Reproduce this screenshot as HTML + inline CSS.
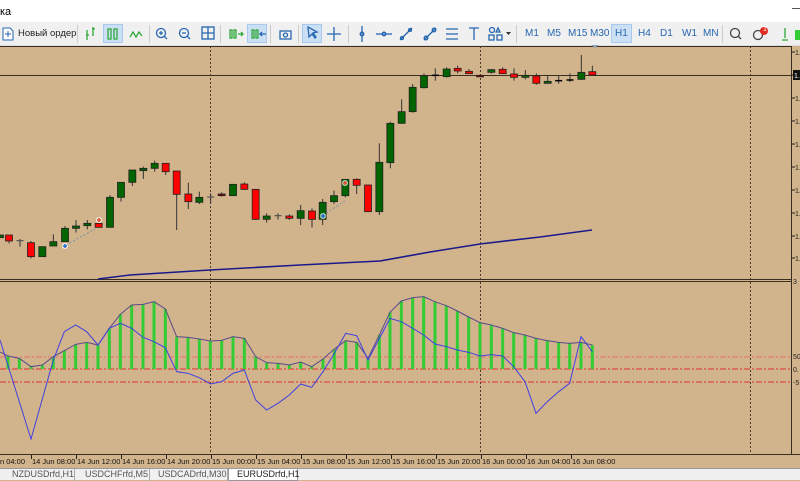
<!DOCTYPE html>
<html><head><meta charset="utf-8"><style>
*{margin:0;padding:0;box-sizing:border-box}
body{width:800px;height:480px;overflow:hidden;background:#d2b48c;font-family:"Liberation Sans","DejaVu Sans",sans-serif;position:relative}
#top{position:absolute;left:0;top:0;width:800px;height:22px;background:#fff;font-size:11px;color:#000}
#tb{position:absolute;left:0;top:22px;width:800px;height:24px;background:#f0f0f0;border-bottom:1px solid #ddd;font-size:10px;color:#1a5ea8}
.hl{position:absolute;top:2px;height:19px;background:#cce0f5;border:1px solid #a8c8ee}
.sep{position:absolute;top:3px;width:1px;height:18px;background:#ccc}
.tf{position:absolute;top:6px;font-size:10px;color:#2566b0}
#tabs{position:absolute;left:0;top:468px;width:800px;height:12px;background:#f0f0f0;border-top:1px solid #999;font-size:9px;color:#555}
.tab{position:absolute;top:0;height:12px;padding-left:12px;border-right:1px solid #aaa}
</style></head><body>
<div id="top"><span style="position:absolute;left:0;top:6px">ка</span><div style="position:absolute;right:0;top:8px;width:8px;height:1px;background:#555"></div></div>
<div id="tb">
<svg style="position:absolute;left:2px;top:5px" width="12" height="14"><path d="M1 1h7l3 3v9H1z" fill="#fff" stroke="#2566b0"/><path d="M6 4v6M3 7h6" stroke="#2566b0"/></svg>
<span style="position:absolute;left:18px;top:6px;color:#222;font-size:9.5px">Новый ордер</span>
<div class="sep" style="left:77px"></div>
<div class="hl" style="left:103px;width:20px"></div>
<div class="hl" style="left:247px;width:20px"></div>
<div class="hl" style="left:302px;width:20px"></div>
<div class="hl" style="left:611px;width:21px"></div>
<div class="sep" style="left:149px"></div><div class="sep" style="left:220px"></div><div class="sep" style="left:270px"></div><div class="sep" style="left:298px"></div><div class="sep" style="left:348px"></div><div class="sep" style="left:516px"></div><div class="sep" style="left:722px"></div>
<svg style="position:absolute;left:0;top:0" width="800" height="24" fill="none" stroke-width="1.3">
<g stroke="#2fa83a"><path d="M87 8v10M86 13h3M93 5v9M92 7h3"/><rect x="108" y="7" width="3" height="10"/><rect x="114" y="7" width="3" height="10"/><path d="M130 15l3-5 3 5 3-5 3 4"/>
<rect x="230" y="8" width="2" height="8"/><rect x="234" y="8" width="2" height="8"/><path d="M238 12h5M241 10l2 2-2 2"/>
<rect x="252" y="8" width="2" height="8"/><rect x="256" y="8" width="2" height="8"/></g>
<path d="M260 12h6M262 10l-2 2 2 2" stroke="#2566b0"/>
<g stroke="#2566b0"><circle cx="161" cy="11" r="4.5"/><path d="M164 14l3 3M159 11h4M161 9v4"/><circle cx="184" cy="11" r="4.5"/><path d="M187 14l3 3M182 11h4"/><rect x="202" y="5" width="12" height="12"/><path d="M208 5v12M202 11h12"/>
<rect x="280" y="9" width="11" height="8"/><circle cx="285.5" cy="13" r="2"/><path d="M308 5l9 5-4 1 3 4-1 1-3-4-3 3z"/><path d="M334 5v14M327 12h14"/>
<path d="M362 4v16"/><circle cx="362" cy="12" r="1.8"/><path d="M376 12h16"/><circle cx="384" cy="12" r="1.8"/><path d="M400 18l12-12"/><circle cx="402" cy="16" r="1.5"/><circle cx="410" cy="8" r="1.5"/><path d="M424 18l12-12"/><circle cx="426" cy="16" r="1.8"/><circle cx="434" cy="8" r="1.8"/>
<path d="M446 7h12M446 12h12M446 17h12"/><path d="M469 6h10M474 6v12"/><circle cx="492" cy="8" r="2.5"/><rect x="489" y="13" width="5" height="5"/><rect x="497" y="13" width="5" height="5"/><path d="M496 10l2-4 2 4z"/></g>
<path d="M506 10h5l-2.5 3z" fill="#333"/>
<circle cx="735" cy="11" r="4.5" stroke="#444"/><path d="M738 14l3 3" stroke="#444"/>
<circle cx="758" cy="13" r="4.5" stroke="#444"/><circle cx="764" cy="9" r="4" fill="#e02b20" stroke="none"/>
<path d="M785 6v10M782 18h6" stroke="#2fa83a"/><rect x="795" y="8" width="5" height="10" fill="#3c3" stroke="none"/>
</svg>
<span style="position:absolute;left:763px;top:4px;font-size:7px;color:#fff">1</span>
<span class="tf" style="left:525px">M1</span><span class="tf" style="left:547px">M5</span><span class="tf" style="left:568px">M15</span><span class="tf" style="left:590px">M30</span><span class="tf" style="left:615px">H1</span><span class="tf" style="left:638px">H4</span><span class="tf" style="left:660px">D1</span><span class="tf" style="left:682px">W1</span><span class="tf" style="left:703px">MN</span>
</div>
<svg id="ch" style="position:absolute;left:0;top:0" width="800" height="468"></svg>
<div id="tabs">
<div class="tab" style="left:0;width:75px">NZDUSDrfd,H1</div>
<div class="tab" style="left:75px;width:75px;padding-left:10px">USDCHFrfd,M5</div>
<div class="tab" style="left:150px;width:78px;padding-left:8px">USDCADrfd,M30</div>
<div class="tab" style="left:228px;width:70px;background:#fff;color:#222;padding-left:8px;border:1px solid #999;border-top:none">EURUSDrfd,H1</div>
</div>
<script>
var s='';
function L(x1,y1,x2,y2,c,w,d){s+='<line x1="'+x1+'" y1="'+y1+'" x2="'+x2+'" y2="'+y2+'" stroke="'+c+'" stroke-width="'+(w||1)+'"'+(d?' stroke-dasharray="'+d+'"':'')+'/>';}
L(0,46.5,791,46.5,'#3a2e20');L(0,279.5,791,279.5,'#3a2e20');L(0,281.5,791,281.5,'#3a2e20');L(0,454.5,800,454.5,'#3a2e20');L(791.5,46,791.5,455,'#3a2e20');
[210,480,750].forEach(function(x){L(x+.5,46,x+.5,455,'#4a3a2a',1,'2,2');});
L(0,75.5,791,75.5,'#3a2e20');
[52,75,98,121,144,167,190,213,236,258].forEach(function(y,i){L(791,y,795,y,'#222');if(i!=1)s+='<text x="795" y="'+(y+3)+'" font-size="7" fill="#222">1.</text>';});
s+='<rect x="793" y="70" width="7" height="10" fill="#111"/><text x="794" y="78" font-size="7" fill="#fff">1.</text>';
s+='<text x="793" y="284" font-size="7" fill="#222">3</text><text x="793" y="359" font-size="7" fill="#222">50</text><text x="793" y="372" font-size="7" fill="#222">0.</text><text x="793" y="385" font-size="7" fill="#222">-5</text>';
var G='#006400',R='#ff0000';
var c5=[[0,285,293,285,293,G],[27,285,303,285,310,R],[60,302,304,297,320,'d'],[93,308,350,303,355,R],[127,320,350,320,350,G],[160,305,318,283,318,G],[195,265,305,258,305,G],[228,258,265,240,278,G],[262,250,257,240,268,G],[296,250,262,250,262,R],[330,172,262,165,262,G],[363,127,172,127,185,G],[397,90,127,90,138,G],[430,85,92,80,117,G],[464,70,85,62,95,G],[497,70,95,70,105,R],[530,93,163,93,270,R],[565,162,185,128,207,R],[598,172,187,155,192,G],[632,171,173,160,190,'d'],[665,162,167,157,170,'#8b0000'],[699,133,167,133,167,G],[733,132,148,127,150,R],[767,148,238,148,240,R],[800,228,238,220,248,G],[834,227,229,220,238,'d'],[868,228,235,223,240,R],[902,212,235,195,255,G],[936,213,238,205,262,R],[968,187,238,177,255,G],[1002,167,185,152,192,G],[1036,118,167,118,172,G],[1070,118,136,115,162,R],[1104,135,215,135,215,R],[1138,67,215,10,225,G]];
var c6=[[211,220,338,215,355,G],[245,185,220,148,220,G],[278,112,185,102,188,G],[312,77,113,70,116,G],[346,76,79,55,92,'k'],[380,57,80,52,83,G],[413,55,63,47,70,R],[447,64,71,57,71,R],[480,76,79,74,80,'#8b0000'],[514,59,67,57,71,G],[548,58,71,52,71,R],[582,72,82,55,92,R],[616,76,82,60,88,G],[649,78,100,70,104,R],[683,94,100,78,101,G],[716,92,94,75,101,'k'],[750,90,92,70,96,'k'],[784,67,88,15,90,G],[817,65,75,47,75,R]];
function cd(x,bt,bb,wt,wb,c){
 L(x,wt,x,wb,'#333');
 if(c=='d'){L(x-3.5,bt,x+3.5,bt,'#555',1.2);return;}
 if(c=='k'){L(x-3.5,bt,x+3.5,bt,'#000',1.5);return;}
 s+='<rect x="'+(x-3.5)+'" y="'+bt+'" width="7" height="'+Math.max(bb-bt,1.5)+'" fill="'+c+'" stroke="#222" stroke-width="0.8"/>';}
c5.forEach(function(a){cd(a[0]/3,a[1]/3+140,a[2]/3+140,a[3]/3+140,a[4]/3+140,a[5]);});
c6.forEach(function(a){cd(a[0]/3+320,a[1]/3+50,a[2]/3+50,a[3]/3+50,a[4]/3+50,a[5]);});
s+='<path d="M66 245L95 229" stroke="#7a90a8" stroke-dasharray="2,2"/><path d="M323 215L345 201" stroke="#7a90a8" stroke-dasharray="2,2"/>';
[[65,246,'#1e6ad0'],[99,220,'#e04a2a'],[323,216,'#1e6ad0'],[345,183,'#e04a2a']].forEach(function(m){s+='<circle cx="'+m[0]+'" cy="'+m[1]+'" r="3" fill="#fff" opacity=".7"/><path d="M'+(m[0]-2)+' '+m[1]+'h4M'+m[0]+' '+(m[1]-2)+'v4" stroke="'+m[2]+'" stroke-width="1.5"/>';});
s+='<path d="M591 45l4 3 4-3z" fill="#8aa0b8"/>';
s+='<polyline points="98,279 130,275 210,270 300,265 380,261 430,252 480,244 540,237 592,230" fill="none" stroke="#1a1a8a" stroke-width="1.6"/>';
L(0,357,791,357,'#e87070',1,'6,2,2,2');L(0,369,791,369,'#e03030',1,'6,2,2,2');L(0,382,791,382,'#e03030',1,'6,2,2,2');
var b7=[[24,213],[58,220],[93,245],[127,240],[160,215],[193,197],[227,178],[260,172],[294,180],[328,130],[361,88],[395,60],[429,58],[462,50],[496,72],[530,155],[564,157],[598,162],[631,168],[665,166],[699,155],[733,160],[767,215],[800,233],[834,235],[868,240],[902,231],[935,245],[969,222],[1003,192],[1037,167],[1070,172],[1104,220],[1138,150]];
var b8=[[90,82],[124,48],[158,38],[191,35],[225,50],[259,62],[292,78],[326,96],[360,113],[394,120],[428,130],[461,143],[495,150],[528,160],[562,167],[596,172],[629,175],[663,172],[697,180]];
var env=['0,352'];
b7.forEach(function(b){var x=b[0]/3,y=b[1]/3+285;s+='<rect x="'+(x-1.5)+'" y="'+y+'" width="3" height="'+(369-y)+'" fill="#33cc33"/>';env.push(x+','+y);});
b8.forEach(function(b){var x=b[0]/3+360,y=b[1]/3+285;s+='<rect x="'+(x-1.5)+'" y="'+y+'" width="3" height="'+(369-y)+'" fill="#33cc33"/>';env.push(x+','+y);});
s+='<polyline points="'+env.join(' ')+'" fill="none" stroke="#5a4a8a" stroke-width="1"/>';
var p7=[[0,165],[93,462],[160,225],[193,140],[227,120],[260,140],[294,180],[328,130],[361,115],[395,130],[429,157],[462,170],[496,188],[530,260],[564,265],[598,278],[632,297],[665,290],[699,265],[733,255],[767,345],[800,375],[834,355],[868,330],[902,297],[935,307],[969,260],[1003,205],[1037,145],[1070,152],[1104,225]];
var p8=[[90,100],[124,110],[158,130],[191,150],[225,177],[259,185],[292,195],[326,202],[360,213],[394,209],[428,213],[461,245],[495,290],[528,385],[562,350],[596,320],[629,295],[663,155],[697,200]];
var pts=p7.map(function(p){return p[0]/3+','+(p[1]/3+285);}).concat(p8.map(function(p){return (p[0]/3+360)+','+(p[1]/3+285);}));
s+='<polyline points="'+pts.join(' ')+'" fill="none" stroke="#4040e0" stroke-width="1"/>';
var lab=['n 04:00','14 Jun 08:00','14 Jun 12:00','14 Jun 16:00','14 Jun 20:00','15 Jun 00:00','15 Jun 04:00','15 Jun 08:00','15 Jun 12:00','15 Jun 16:00','15 Jun 20:00','16 Jun 00:00','16 Jun 04:00','16 Jun 08:00'];
lab.forEach(function(t,i){var x=-14+45*i;if(i>0)L(x+.5,455,x+.5,459,'#222');s+='<text x="'+(i==0?0:x+1)+'" y="464" font-size="7.5" fill="#111">'+t+'</text>';});
document.getElementById('ch').innerHTML=s;
</script>
</body></html>
